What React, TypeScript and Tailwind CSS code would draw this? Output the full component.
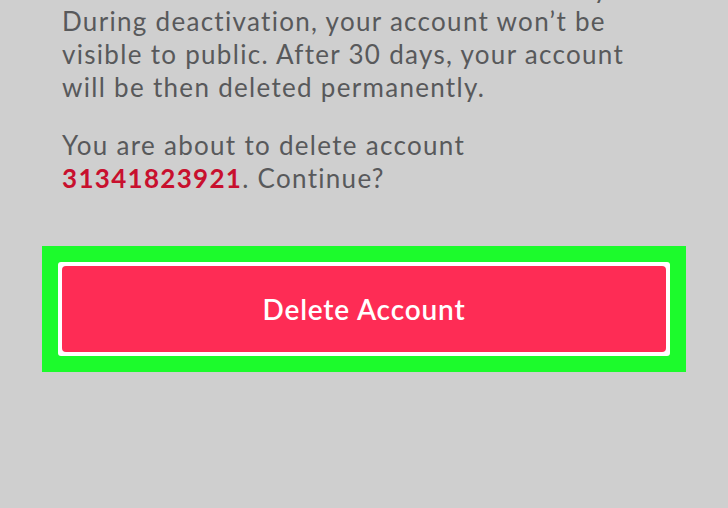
export default function App() {
  return (
    <div
      className="h-[508px] w-[728px] overflow-hidden bg-[#cfcfcf]"
      style={{ fontFamily: "Lato, 'Open Sans', sans-serif" }}
    >
      <div className="pl-[62px] text-[26px] leading-[33px] tracking-[0.05em] text-[#58595b]">
        <p className="-mt-[28px] w-[600px]">Your account will be deactivated for 30 days.</p>
        <p className="w-[600px]">
          During deactivation, your account won’t be visible to public. After 30 days, your account will be
          then deleted permanently.
        </p>
        <p className="mt-[25px] w-[460px]">
          You are about to delete account <span className="font-bold text-[#c8102e]">31341823921</span>.
          Continue?
        </p>
      </div>

      <div className="ml-[42px] mt-[51px] w-[644px] bg-[#1cfb2c] p-[16px]">
        <div className="rounded-[3px] bg-white p-[4px]">
          <button className="flex h-[86px] w-full items-center justify-center rounded-[4px] bg-[#fe2c55] text-[28px] font-semibold tracking-[0.03em] text-white">
            Delete Account
          </button>
        </div>
      </div>
    </div>
  );
}
